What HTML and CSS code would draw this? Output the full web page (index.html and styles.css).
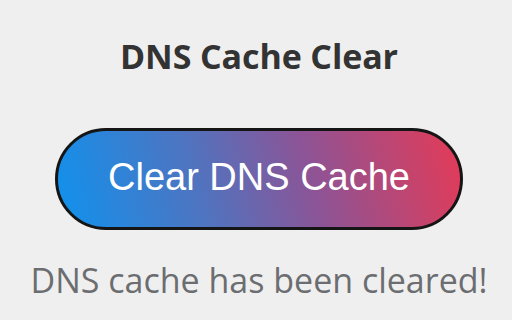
FILE: index.html
```html
<!DOCTYPE html>
<html>
<head>
<meta charset="utf-8">
<link rel="stylesheet" href="styles.css">
</head>
<body>
<main class="popup">
  <h1 class="title">DNS Cache Clear</h1>
  <button class="clear-btn">Clear DNS Cache</button>
  <p class="status">DNS cache has been cleared!</p>
</main>
</body>
</html>
```
FILE: styles.css
```css
html, body {
  margin: 0;
  padding: 0;
  background: #efefef;
  width: 512px;
  height: 320px;
  overflow: hidden;
}
.popup {
  display: flex;
  flex-direction: column;
  align-items: center;
  padding-top: 34px;
  padding-left: 6px;
}
.title {
  margin: 0;
  font-family: "Open Sans", sans-serif;
  font-weight: 700;
  font-size: 34px;
  line-height: 44px;
  letter-spacing: -0.1px;
  color: #333333;
}
.clear-btn {
  margin-top: 50px;
  width: 408px;
  height: 102px;
  border: 3px solid #151515;
  border-radius: 51px;
  background: linear-gradient(75deg, #0f92ee 0%, #4f74c0 35%, #8c5496 62%, #e53a56 100%);
  color: #ffffff;
  font-family: "Liberation Sans", Arial, sans-serif;
  font-size: 38px;
  padding: 0 0 4px;
}
.status {
  margin: 28px 0 0;
  font-family: "Open Sans", sans-serif;
  font-size: 34px;
  line-height: 44px;
  letter-spacing: 0px;
  color: #6b6d70;
}
```
